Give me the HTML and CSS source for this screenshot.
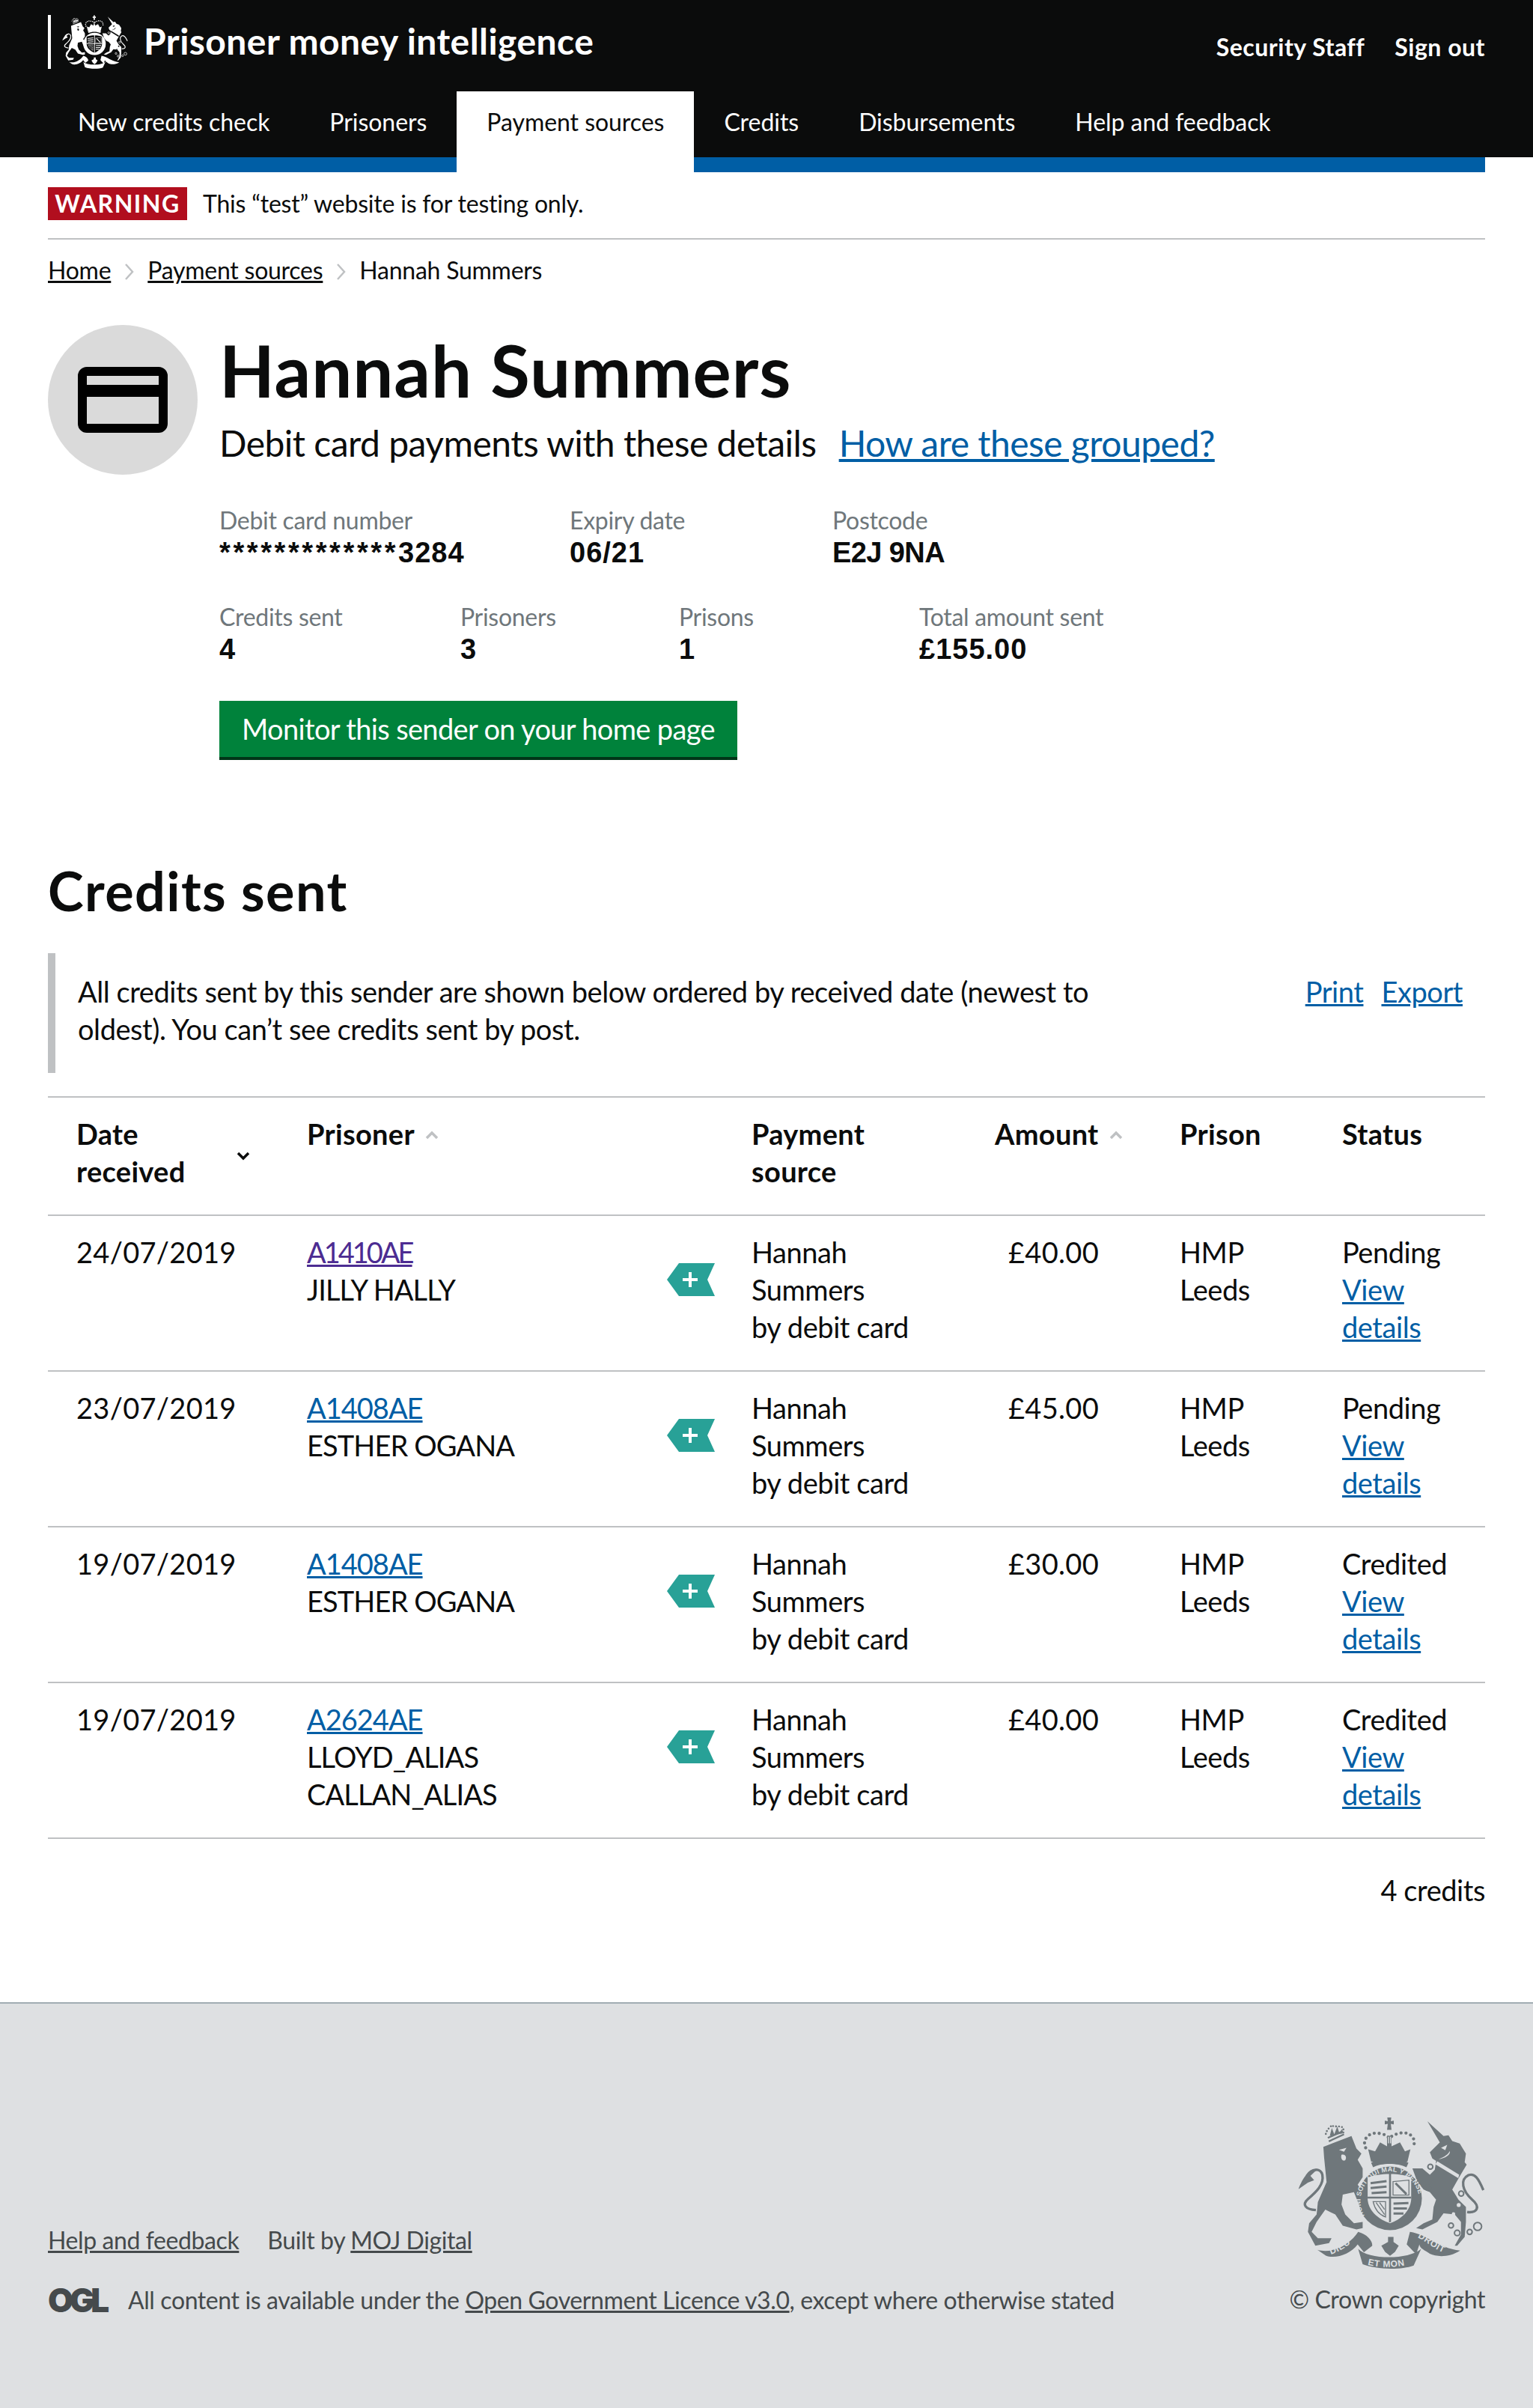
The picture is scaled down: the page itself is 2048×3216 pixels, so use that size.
FILE: index.html
```html
<!DOCTYPE html>
<html lang="en">
<head>
  <meta charset="UTF-8">
  <meta name="viewport" content="width=device-width, initial-scale=1.0">
  <title>Hannah Summers - Prisoner money intelligence</title>
  <link rel="stylesheet" href="styles.css">
</head>
<body>

  <svg class="defs" aria-hidden="true">
    <symbol id="crest" viewBox="160 135 752 615">
      <!-- lion -->
      <path d="M262,258 L375,215 L395,265 L415,285 L400,310 L420,345 L420,380 L400,410 L425,445 L435,480 L405,490 L385,440 L340,450 L335,490 L350,530 L385,565 L420,560 L420,585 L395,590 L340,575 L310,530 L270,510 L235,560 L215,600 L240,625 L295,625 L285,645 L230,655 L200,600 L205,565 L235,530 L240,480 L275,400 L265,300 Z"/>
      <path class="line" stroke-width="10" d="M232,512 C190,510 175,490 200,468 C232,440 266,410 258,370 C250,342 215,345 195,375"/>
      <path d="M240,346 C205,345 180,380 162,428 L200,402 L225,392 L210,375 Z"/>
      <path class="cut" d="M325,270 L355,262 L345,278 Z M335,290 C350,285 358,300 350,312 C340,318 330,305 335,290 Z"/>
      <path class="dots small" d="M272,206 C275,190 290,178 296,172 C305,180 325,172 340,180 C345,190 342,200 342,206"/>
      <path class="line" stroke-width="7" d="M284,236 L345,208 M280,222 L340,196"/>
      <path d="M288,214 L296,182 L306,208 L318,176 L326,202 L338,186 L340,204 Z"/>
      <!-- unicorn -->
      <path d="M680,155 L745,215 L765,212 L780,235 L810,245 L835,285 L830,320 L838,330 L820,360 L805,385 L780,430 L805,470 L835,500 L835,560 L830,620 L800,655 L790,655 L815,610 L815,560 L790,530 L745,525 L720,560 L660,590 L635,585 L665,565 L700,550 L705,500 L715,470 L690,440 L665,430 L640,400 L620,345 L660,345 L690,370 L710,350 L715,315 L700,305 L690,280 L730,240 Z"/>
      <path class="cut" d="M712,328 L720,316 L808,370 L804,384 Z"/>
      <path class="cut" d="M735,262 L760,250 L752,272 Z M770,275 C775,290 750,305 725,308 C750,298 765,288 770,275 Z"/>
      <circle class="cut" cx="806" cy="492" r="8"/><circle class="cut" cx="785" cy="528" r="7"/>
      <path class="line" stroke-width="10" d="M840,520 C880,525 895,500 860,470 C820,435 810,390 845,372 C870,362 885,385 905,432"/>
      <g class="line" stroke-width="6">
        <circle cx="692" cy="338" r="10"/><circle cx="682" cy="422" r="11"/><circle cx="816" cy="446" r="10"/>
        <circle cx="775" cy="574" r="10"/><circle cx="800" cy="604" r="11"/><circle cx="850" cy="600" r="10"/><circle cx="882" cy="578" r="16"/>
      </g>
      <!-- royal crown -->
      <path d="M519,140 L535,140 L533,155 L545,153 L545,168 L533,166 L536,190 L518,190 L521,166 L509,168 L509,153 L521,155 Z"/>
      <path class="dots" d="M432,262 C415,225 450,195 490,205 C510,208 520,215 527,225 C535,215 548,208 570,203 C610,195 640,225 622,262"/>
      <path d="M518,214 L536,214 L536,256 L570,240 L590,276 L612,268 L600,318 L454,318 L442,268 L470,276 L490,240 L518,256 Z"/>
      <path class="cut" d="M522,218 L526,218 L526,244 L522,244 Z M530,218 L534,218 L534,244 L530,244 Z"/>
      <path d="M454,322 C490,300 565,300 604,322 L596,340 C560,322 495,322 462,340 Z"/>
      <!-- garter and shield -->
      <circle cx="530" cy="465" r="128"/>
      <path class="cut" d="M440,382 C480,362 580,362 615,382 L615,470 C610,520 570,550 530,565 C488,550 445,520 440,470 Z"/>
      <path d="M526,366 L534,366 L534,560 L526,562 Z M440,458 L615,458 L615,466 L440,466 Z"/>
      <g class="line" stroke-width="9">
        <path d="M452,404 L516,396 M452,424 L516,418 M456,444 L516,440"/>
        <path d="M544,486 L604,484 M544,506 L598,506 M544,526 L584,526"/>
        <path d="M552,404 L596,448"/>
      </g>
      <g class="line" stroke-width="4">
        <path d="M542,398 L606,392 L606,452 L542,452 Z"/>
        <path d="M462,478 L512,478 L512,540 C485,530 468,505 462,478 Z M474,482 L508,530 M488,482 L508,510"/>
      </g>
      <!-- motto scroll -->
      <path d="M238,672 C300,690 370,650 402,600 C440,610 462,640 458,656 L425,682 L400,650 C370,690 310,710 272,695 Z"/>
      <path d="M402,668 C440,710 600,715 655,668 L625,735 C570,755 470,750 420,730 Z"/>
      <path d="M610,600 C680,610 720,665 812,675 C770,702 720,702 690,688 C670,672 650,668 648,650 L635,690 L597,650 Z"/>
      <path d="M522,620 L544,620 L544,640 L565,655 L550,680 L530,696 L510,680 L495,655 L522,640 Z"/>
    </symbol>
  </svg>

  <header class="top">
    <div class="top-row">
      <a class="brand" href="#">
        <svg class="brand-crest"><use href="#crest"/></svg>
        <span class="brand-name">Prisoner money intelligence</span>
      </a>
      <div class="user-links">
        <a href="#">Security Staff</a>
        <a href="#">Sign out</a>
      </div>
    </div>
    <nav class="tabs">
      <a href="#">New credits check</a>
      <a href="#">Prisoners</a>
      <a class="active" href="#">Payment sources</a>
      <a href="#">Credits</a>
      <a href="#">Disbursements</a>
      <a href="#">Help and feedback</a>
    </nav>
  </header>
  <div class="blue-bar"></div>

  <main class="page">
    <div class="warning">
      <strong class="warning-tag">WARNING</strong>
      <span>This “test” website is for testing only.</span>
    </div>

    <div class="breadcrumbs">
      <a href="#">Home</a>
      <svg class="crumb-sep" viewBox="0 0 12 22"><path d="M1,1 L10,11 L1,21"/></svg>
      <a href="#">Payment sources</a>
      <svg class="crumb-sep" viewBox="0 0 12 22"><path d="M1,1 L10,11 L1,21"/></svg>
      <span>Hannah Summers</span>
    </div>

    <section class="hero">
      <div class="hero-icon">
        <svg width="120" height="88" viewBox="0 0 120 88">
          <rect x="6" y="6" width="108" height="76" rx="6" fill="none" stroke="#000" stroke-width="12"/>
          <rect x="6" y="24" width="108" height="16"/>
        </svg>
      </div>
      <div class="hero-body">
        <h1>Hannah Summers</h1>
        <p class="hero-sub"><span>Debit card payments with these details</span><a href="#">How are these grouped?</a></p>

        <div class="stats">
          <div class="stat w-468"><span>Debit card number</span><strong><b class="stars">*************</b>3284</strong></div>
          <div class="stat w-351"><span>Expiry date</span><strong>06/21</strong></div>
          <div class="stat"><span>Postcode</span><strong class="postcode">E2J 9NA</strong></div>
        </div>
        <div class="stats">
          <div class="stat w-322"><span>Credits sent</span><strong>4</strong></div>
          <div class="stat w-292"><span>Prisoners</span><strong>3</strong></div>
          <div class="stat w-321"><span>Prisons</span><strong>1</strong></div>
          <div class="stat"><span>Total amount sent</span><strong>£155.00</strong></div>
        </div>

        <a class="button" href="#">Monitor this sender on your home page</a>
      </div>
    </section>

    <h2>Credits sent</h2>

    <div class="inset">
      <p>All credits sent by this sender are shown below ordered by received date (newest to<br>oldest). You can’t see credits sent by post.</p>
      <div class="inset-links"><a href="#">Print</a><a href="#">Export</a></div>
    </div>

    <table class="credits">
      <colgroup>
        <col class="c-date"><col class="c-prisoner"><col class="c-source"><col class="c-amount"><col class="c-prison"><col class="c-status">
      </colgroup>
      <thead>
        <tr>
          <th><div class="sort sort-date"><span>Date<br>received</span><svg class="arrow dark" viewBox="0 0 18 12"><path d="M2,2 L9,9 L16,2"/></svg></div></th>
          <th><div class="sort"><span>Prisoner</span><svg class="arrow" viewBox="0 0 18 12"><path d="M2,10 L9,3 L16,10"/></svg></div></th>
          <th>Payment<br>source</th>
          <th><div class="sort"><span>Amount</span><svg class="arrow" viewBox="0 0 18 12"><path d="M2,10 L9,3 L16,10"/></svg></div></th>
          <th>Prison</th>
          <th>Status</th>
        </tr>
      </thead>
      <tbody>
        <tr>
          <td class="date">24/07/2019</td>
          <td><div class="prisoner"><div class="name"><a class="prisoner-id visited" href="#">A1410AE</a><br>JILLY HALLY</div><svg class="tag" viewBox="0 0 64 44"><path d="M0,22 L16,0 L64,0 L54,22 L64,44 L16,44 Z"/><path class="plus" d="M21,20 L29,20 L29,12 L33,12 L33,20 L41,20 L41,24 L33,24 L33,32 L29,32 L29,24 L21,24 Z"/></svg></div></td>
          <td>Hannah<br>Summers<br>by debit card</td>
          <td class="amount">£40.00</td>
          <td>HMP<br>Leeds</td>
          <td>Pending<br><a href="#">View<br>details</a></td>
        </tr>
        <tr>
          <td class="date">23/07/2019</td>
          <td><div class="prisoner"><div class="name"><a class="prisoner-id" href="#">A1408AE</a><br>ESTHER OGANA</div><svg class="tag" viewBox="0 0 64 44"><path d="M0,22 L16,0 L64,0 L54,22 L64,44 L16,44 Z"/><path class="plus" d="M21,20 L29,20 L29,12 L33,12 L33,20 L41,20 L41,24 L33,24 L33,32 L29,32 L29,24 L21,24 Z"/></svg></div></td>
          <td>Hannah<br>Summers<br>by debit card</td>
          <td class="amount">£45.00</td>
          <td>HMP<br>Leeds</td>
          <td>Pending<br><a href="#">View<br>details</a></td>
        </tr>
        <tr>
          <td class="date">19/07/2019</td>
          <td><div class="prisoner"><div class="name"><a class="prisoner-id" href="#">A1408AE</a><br>ESTHER OGANA</div><svg class="tag" viewBox="0 0 64 44"><path d="M0,22 L16,0 L64,0 L54,22 L64,44 L16,44 Z"/><path class="plus" d="M21,20 L29,20 L29,12 L33,12 L33,20 L41,20 L41,24 L33,24 L33,32 L29,32 L29,24 L21,24 Z"/></svg></div></td>
          <td>Hannah<br>Summers<br>by debit card</td>
          <td class="amount">£30.00</td>
          <td>HMP<br>Leeds</td>
          <td>Credited<br><a href="#">View<br>details</a></td>
        </tr>
        <tr>
          <td class="date">19/07/2019</td>
          <td><div class="prisoner"><div class="name"><a class="prisoner-id" href="#">A2624AE</a><br>LLOYD_ALIAS<br>CALLAN_ALIAS</div><svg class="tag" viewBox="0 0 64 44"><path d="M0,22 L16,0 L64,0 L54,22 L64,44 L16,44 Z"/><path class="plus" d="M21,20 L29,20 L29,12 L33,12 L33,20 L41,20 L41,24 L33,24 L33,32 L29,32 L29,24 L21,24 Z"/></svg></div></td>
          <td>Hannah<br>Summers<br>by debit card</td>
          <td class="amount">£40.00</td>
          <td>HMP<br>Leeds</td>
          <td>Credited<br><a href="#">View<br>details</a></td>
        </tr>
      </tbody>
    </table>

    <p class="count">4 credits</p>
  </main>

  <footer class="footer">
    <div class="footer-left">
      <p class="footer-links"><a href="#">Help and feedback</a><span>Built by <a href="#">MOJ Digital</a></span></p>
      <p class="footer-licence"><span class="ogl">OGL</span><span>All content is available under the <a href="#">Open Government Licence v3.0</a>, except where otherwise stated</span></p>
    </div>
    <div class="footer-right">
      <svg class="footer-crest" viewBox="160 135 752 615">
        <use href="#crest" x="160" y="135" width="752" height="615"/>
        <defs>
          <path id="garter-path" d="M428,535 A118,118 0 1,1 634,530"/>
          <path id="motto-left" d="M292,690 C330,680 370,650 398,622"/>
          <path id="motto-mid" d="M440,732 C490,746 570,744 618,725"/>
          <path id="motto-right" d="M640,622 C680,640 710,675 770,692"/>
        </defs>
        <text class="cut crest-garter"><textPath href="#garter-path">HONI SOIT QUI MAL Y PENSE</textPath></text>
        <text class="cut crest-motto"><textPath href="#motto-left">DIEU</textPath></text>
        <text class="cut crest-motto"><textPath href="#motto-mid">ET MON</textPath></text>
        <text class="cut crest-motto"><textPath href="#motto-right">DROIT</textPath></text>
      </svg>
      <span>© Crown copyright</span>
    </div>
  </footer>

</body>
</html>
```

FILE: styles.css
```css
* {
  box-sizing: border-box;
}
body {
  margin: 0;
  font-family: Lato, "Noto Sans", sans-serif;
  font-size: 38px;
  line-height: 50px;
  letter-spacing: -0.44px;
  color: #0b0c0c;
  background: #fff;
}
a {
  color: #005ea5;
}
p, h1, h2 {
  margin: 0;
}
.defs {
  width: 0;
  height: 0;
  display: block;
}

/* crest, shared by header and footer */
.line {
  fill: none;
  stroke: currentColor;
}
.brand-crest, .footer-crest {
  fill: currentColor;
}
.cut {
  fill: var(--crest-bg);
}
.dots {
  fill: none;
  stroke: currentColor;
  stroke-width: 13;
  stroke-linecap: round;
  stroke-dasharray: 0 20;
}
.dots.small {
  stroke-width: 8;
  stroke-dasharray: 0 12;
}
.crest-garter {
  font-family: "Liberation Sans", sans-serif;
  font-weight: bold;
  font-size: 27px;
  letter-spacing: 1px;
}
.crest-motto {
  font-family: "Liberation Sans", sans-serif;
  font-weight: bold;
  font-size: 36px;
  letter-spacing: 2px;
}

/* header */
.top {
  background: #0b0c0c;
  color: #fff;
  height: 210px;
  --crest-bg: #0b0c0c;
}
.top a {
  color: #fff;
  text-decoration: none;
}
.top-row {
  height: 122px;
  padding: 0 64px;
  display: flex;
  justify-content: space-between;
}
.brand {
  margin-top: 20px;
  height: 72px;
  border-left: 4px solid #fff;
  padding-left: 15px;
  display: flex;
  align-items: center;
  gap: 21px;
}
.brand-crest {
  width: 88px;
  height: 72px;
}
.brand-name {
  font-size: 48px;
  font-weight: bold;
  line-height: 56px;
  letter-spacing: 0.45px;
  margin-top: -2px;
}
.user-links {
  display: flex;
  gap: 40px;
  font-size: 32px;
  font-weight: bold;
  line-height: 40px;
  letter-spacing: 0.5px;
  padding-top: 43px;
}
.tabs {
  display: flex;
  padding: 0 64px;
}
.tabs a {
  font-size: 32px;
  line-height: 40px;
  letter-spacing: -0.05px;
  padding: 21px 40px 47px;
  height: 108px;
  position: relative;
}
.tabs a.active {
  background: #fff;
  color: #0b0c0c;
}
.blue-bar {
  height: 20px;
  margin: 0 64px;
  background: #005ea5;
}

.page {
  padding: 0 64px;
}
.warning {
  display: flex;
  align-items: center;
  gap: 21px;
  font-size: 32px;
  line-height: 44px;
  letter-spacing: -0.2px;
  padding: 20px 0 24px;
  border-bottom: 2px solid #bfc1c3;
}
.warning-tag {
  background: #b10e1e;
  color: #fff;
  width: 186px;
  height: 44px;
  text-align: center;
  letter-spacing: 1.5px;
}
.breadcrumbs {
  display: flex;
  align-items: center;
  font-size: 32px;
  line-height: 40px;
  letter-spacing: -0.25px;
  margin-top: 21px;
}
.breadcrumbs a {
  color: #0b0c0c;
}
.crumb-sep {
  width: 12px;
  height: 22px;
  margin: 4px 18px 0 19px;
  fill: none;
  stroke: #bfc1c3;
  stroke-width: 2.5;
}

/* sender summary */
.hero {
  display: flex;
  margin-top: 53px;
}
.hero-icon {
  flex: none;
  width: 200px;
  height: 200px;
  border-radius: 50%;
  background: #dadada;
  display: flex;
  align-items: center;
  justify-content: center;
}
.hero-body {
  margin-left: 29px;
}
h1 {
  font-size: 96px;
  line-height: 100px;
  font-weight: bold;
  letter-spacing: 0.9px;
  margin-top: 10px;
}
.hero-sub {
  font-size: 48px;
  line-height: 60px;
  letter-spacing: -0.52px;
  margin-top: 18px;
  display: flex;
  gap: 30px;
}
.stats {
  display: flex;
  margin-top: 42px;
}
.hero-sub + .stats {
  margin-top: 53px;
}
.stat {
  display: flex;
  flex-direction: column;
}
.stat > span {
  font-size: 32px;
  line-height: 40px;
  letter-spacing: -0.3px;
  color: #6f777b;
}
.stat strong {
  font-family: "Liberation Sans", sans-serif;
  font-size: 38px;
  line-height: 47px;
  letter-spacing: 1px;
}
.stat .stars {
  letter-spacing: 3.6px;
}
.stat .postcode {
  letter-spacing: -0.6px;
}
.w-468 { width: 468px; }
.w-351 { width: 351px; }
.w-322 { width: 322px; }
.w-292 { width: 292px; }
.w-321 { width: 321px; }
.button {
  display: block;
  width: 692px;
  height: 79px;
  margin-top: 45px;
  padding-top: 12px;
  background: #00823b;
  border-bottom: 4px solid #003618;
  color: #fff;
  letter-spacing: -0.65px;
  text-align: center;
  text-decoration: none;
}

h2 {
  font-size: 72px;
  line-height: 80px;
  font-weight: bold;
  letter-spacing: 1.4px;
  margin-top: 134px;
}
.inset {
  display: flex;
  justify-content: space-between;
  height: 160px;
  margin-top: 44px;
  padding: 26px 30px 0 30px;
  border-left: 10px solid #bfc1c3;
}
.inset-links {
  display: flex;
  gap: 24px;
}

/* credits table */
.credits {
  width: 100%;
  table-layout: fixed;
  border-collapse: collapse;
  margin-top: 31px;
  border-top: 2px solid #bfc1c3;
}
.c-date { width: 308px; }
.c-prisoner { width: 594px; }
.c-source { width: 325px; }
.c-amount { width: 247px; }
.c-prison { width: 217px; }
.c-status { width: 229px; }
.credits th, .credits td {
  padding: 23px 0 33px 38px;
  text-align: left;
  vertical-align: top;
  border-bottom: 2px solid #bfc1c3;
}
.credits th {
  font-weight: bold;
  letter-spacing: 0.3px;
}
.credits .date {
  letter-spacing: 0.3px;
}
.credits .amount {
  text-align: right;
  padding-right: 70px;
  letter-spacing: 0.3px;
}
.sort {
  display: flex;
  align-items: center;
  gap: 14px;
}
.sort-date {
  justify-content: space-between;
}
.arrow {
  width: 18px;
  height: 12px;
  margin-top: 4px;
  fill: none;
  stroke: #bfc1c3;
  stroke-width: 3.5;
}
.arrow.dark {
  stroke: #0b0c0c;
  margin-top: 10px;
  margin-right: 38px;
}
.name {
  letter-spacing: -0.9px;
}
.prisoner-id {
  letter-spacing: -1px;
}
.prisoner-id.visited {
  color: #4c2c92;
  letter-spacing: -3px;
}
.prisoner {
  display: flex;
  justify-content: space-between;
  align-items: flex-start;
  padding-right: 11px;
}
.tag {
  flex: none;
  width: 64px;
  height: 44px;
  margin-top: 40px;
  fill: #28a197;
}
.tag .plus {
  fill: #fff;
}
.count {
  text-align: right;
  margin-top: 43px;
}

/* footer */
.footer {
  margin-top: 125px;
  height: 543px;
  background: #dee0e2;
  border-top: 2px solid #a1acb2;
  color: #454a4c;
  padding: 150px 64px 0;
  font-size: 32px;
  line-height: 40px;
  letter-spacing: -0.4px;
  display: flex;
  justify-content: space-between;
  --crest-bg: #dee0e2;
}
.footer a {
  color: #454a4c;
}
.footer-left {
  padding-top: 146px;
}
.footer-links {
  display: flex;
  gap: 38px;
}
.footer-licence {
  display: flex;
  align-items: center;
  gap: 25px;
  margin-top: 40px;
}
.ogl {
  font-family: Inter, sans-serif;
  font-weight: 900;
  font-size: 44px;
  letter-spacing: -5px;
  line-height: 36px;
  width: 82px;
}
.footer-right {
  display: flex;
  flex-direction: column;
  align-items: flex-end;
  gap: 20px;
}
.footer-crest {
  width: 250px;
  height: 205px;
  color: #6f777b;
}
```
